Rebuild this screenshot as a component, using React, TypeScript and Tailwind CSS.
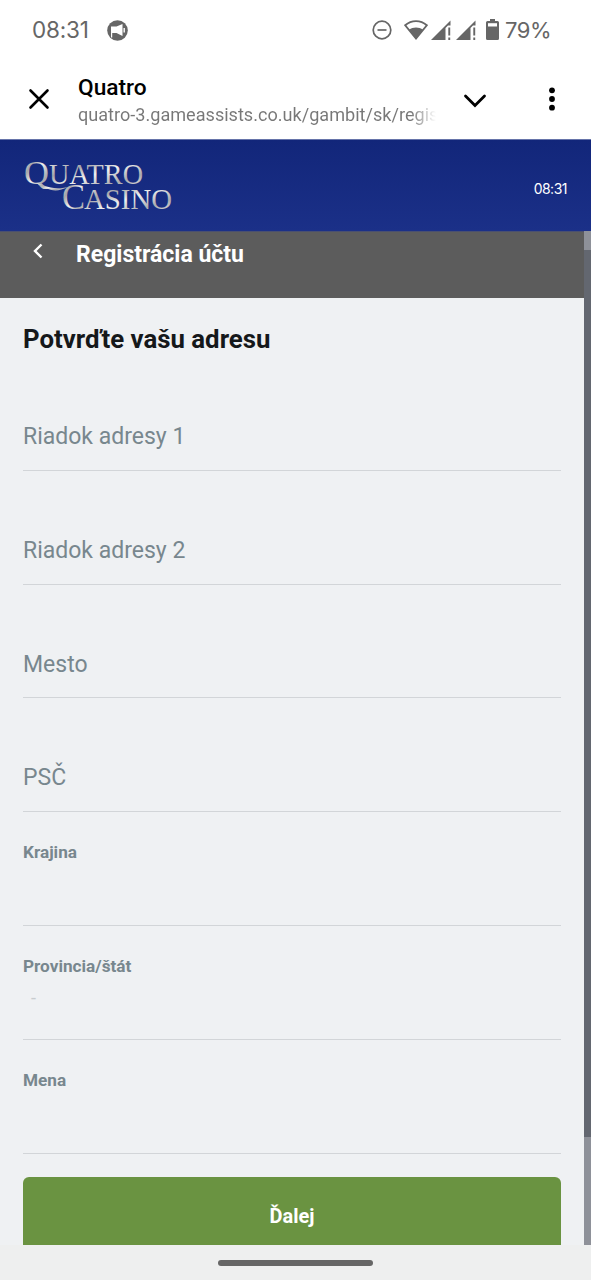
type Field = {
   label: string;
   filled?: boolean;
   value?: string;
};

const FIELDS: Field[] = [
   { label: "Riadok adresy 1" },
   { label: "Riadok adresy 2" },
   { label: "Mesto" },
   { label: "PSČ" },
   { label: "Krajina", filled: true },
   { label: "Provincia/štát", filled: true, value: "-" },
   { label: "Mena", filled: true },
];

function SignalIcon() {
   return (
      <svg className="h-5 w-[21px]" viewBox="0 0 21 20" fill="#666">
         <path d="M0 20 19.500 0.500V5.500H17L14.500 8V20Z" />
         <path d="M17.300 7.500h1.900v8h-1.900zM17.300 17.500h1.900V20h-1.900z" />
      </svg>
   );
}

function StatusBar() {
   return (
      <div className="flex h-15 items-center pl-8 font-['Inter',sans-serif] text-[#666]">
         <span className="w-[75px] text-[22.5px] tracking-[-0.2px]">08:31</span>
         <svg className="h-[21px] w-[21px]" viewBox="0 0 21 21">
            <circle cx="10.500" cy="10.500" r="10.300" fill="#666" />
            <path d="M4 6.500h5.500L15.500 4v12L9.500 13H5.200v4.500H4z" fill="#fff" />
            <path d="M17.200 8v4.500" stroke="#fff" strokeWidth="1.400" />
         </svg>
         <div className="ml-auto flex w-[219px] items-center">
            <svg className="h-5 w-5" viewBox="0 0 20 20" fill="none" stroke="#666" strokeWidth="1.7">
               <circle cx="10" cy="10" r="8.8" />
               <path d="M5.500 10h9" />
            </svg>
            <svg className="ml-3 h-5 w-6" viewBox="0 0 24 20">
               <path d="M1.200 5.200C7.500-.3 16.500-.3 22.800 5.200L12 18.500Z" fill="none" stroke="#666" strokeWidth="1.800" />
               <path d="M5 9.800c4-3.200 10-3.200 14 0L12 18.500z" fill="#666" />
            </svg>
            <div className="ml-[3px] flex gap-1">
               <SignalIcon />
               <SignalIcon />
            </div>
            <svg className="ml-[9px] h-[22px] w-[13px]" viewBox="0 0 13 22">
               <path d="M4 0h5v2h2.500Q13 2 13 3.500v16q0 1.500-1.500 1.500h-10Q0 21 0 19.500v-16Q0 2 1.500 2H4z" fill="#666" />
               <path d="M2 4.200h9v3.300H2z" fill="#fff" />
            </svg>
            <span className="ml-[6px] text-[22px] tracking-[-0.5px]">79%</span>
         </div>
      </div>
   );
}

function BrowserBar() {
   return (
      <div className="flex h-[79px] items-center pl-7">
         <svg className="mb-0.5 h-[22px] w-[22px]" viewBox="0 0 22 22" stroke="#000" strokeWidth="2.6" strokeLinecap="round">
            <path d="m2.500 2.500 17 17M19.500 2.500l-17 17" />
         </svg>
         <div className="mt-0.5 ml-7 w-[358px]">
            <div className="text-[22.7px] leading-[27px] font-medium text-black">Quatro</div>
            <div className="overflow-hidden bg-linear-to-r from-[#777] from-93% to-transparent bg-clip-text text-[18.1px] leading-[27px] whitespace-nowrap text-transparent">
               quatro-3.gameassists.co.uk/gambit/sk/regis
            </div>
         </div>
         <svg className="ml-[27px] h-4 w-6" viewBox="0 0 24 16" fill="none" stroke="#000" strokeWidth="2.800" strokeLinecap="round">
            <path d="m2.500 4 9.500 9.500L21.500 4" />
         </svg>
         <svg className="mb-0.5 ml-[61px] h-6 w-2" viewBox="0 0 8 24">
            <circle cx="4" cy="3.300" r="2.900" />
            <circle cx="4" cy="12" r="2.900" />
            <circle cx="4" cy="20.700" r="2.900" />
         </svg>
      </div>
   );
}

function Logo() {
   return (
      <svg className="h-[76px] w-[152px] font-['Liberation_Serif',serif]" viewBox="1 -10 152 76">
         <defs>
            <linearGradient id="silver" x1="0" y1="0" x2="1" y2="1">
               <stop offset="0" stopColor="#f5f5f5" />
               <stop offset="0.3" stopColor="#a5a5aa" />
               <stop offset="0.5" stopColor="#f0f0f0" />
               <stop offset="0.75" stopColor="#aaaaae" />
               <stop offset="1" stopColor="#eeeeee" />
            </linearGradient>
         </defs>
         <g fill="url(#silver)">
            <text x="1" y="26" fontSize="34" textLength="25" lengthAdjust="spacingAndGlyphs">Q</text>
            <text x="26" y="26" fontSize="29" textLength="94" lengthAdjust="spacingAndGlyphs">UATRO</text>
            <text x="39" y="51" fontSize="35" textLength="23" lengthAdjust="spacingAndGlyphs">C</text>
            <text x="61" y="51" fontSize="29" textLength="88" lengthAdjust="spacingAndGlyphs">ASINO</text>
            <path d="M13 25C21 26 27 33 45 29 31 36 24 31 13 25Z" />
         </g>
      </svg>
   );
}

function FormField({ label, filled, value }: Field) {
   return (
      <label className="flex h-[113.8px] flex-col border-b-[1.5px] border-[#d2d5d8] text-[#78878e]">
         {filled ? (
            <>
               <span className="mt-[30px] text-[17.2px] leading-5 font-bold">{label}</span>
               <span className="mt-3 pl-2 text-[18px] leading-5 text-[#c8cccf]">{value}</span>
            </>
         ) : (
            <span className="mt-[66px] text-[23px] leading-7">{label}</span>
         )}
      </label>
   );
}

export default function App() {
   return (
      <div className="flex h-[1280px] w-full flex-col overflow-hidden bg-white font-['Roboto',sans-serif]">
         <StatusBar />
         <BrowserBar />
         <header className="flex h-[92px] shrink-0 items-center justify-between border-t border-[#6674aa] bg-linear-to-b from-[#12267a] to-[#1b3088] pr-6 pl-6 text-white">
            <Logo />
            <span className="mt-1.5 font-['Inter',sans-serif] text-[14px] tracking-[-0.5px]">08:31</span>
         </header>
         <div className="flex h-[1014px] shrink-0">
            <main className="flex min-w-0 flex-1 flex-col overflow-hidden bg-[#eff1f3]">
               <div className="flex h-[67px] shrink-0 border-t border-[#4a5070] bg-[#5c5c5c] pl-8 text-white">
                  <svg className="mt-[11px] h-4 w-3" viewBox="0 0 12 16" fill="none" stroke="#fff" strokeWidth="2.400">
                     <path d="M9.500 1.500 3 8l6.500 6.500" />
                  </svg>
                  <h1 className="mt-[9px] ml-8 text-[23px] leading-7 font-bold">Registrácia účtu</h1>
               </div>
               <form className="px-[23px]">
                  <h2 className="h-[59px] pt-[25px] text-[25.8px] leading-8 font-bold text-[#15181a]">Potvrďte vašu adresu</h2>
                  {FIELDS.map((field) => (
                     <FormField key={field.label} {...field} />
                  ))}
                  <button type="button" className="mt-[23px] h-[78px] w-full rounded-md bg-[#6a9341] text-[20px] font-bold text-white">
                     Ďalej
                  </button>
               </form>
            </main>
            <div className="flex w-[7px] flex-col bg-[#8e9199]">
               <div className="mt-[19px] h-[887px] bg-[#636770]" />
            </div>
         </div>
         <div className="flex h-[35px] shrink-0 items-center justify-center bg-[#eeefef]">
            <div className="h-[6px] w-[155px] rounded-full bg-[#666]" />
         </div>
      </div>
   );
}
